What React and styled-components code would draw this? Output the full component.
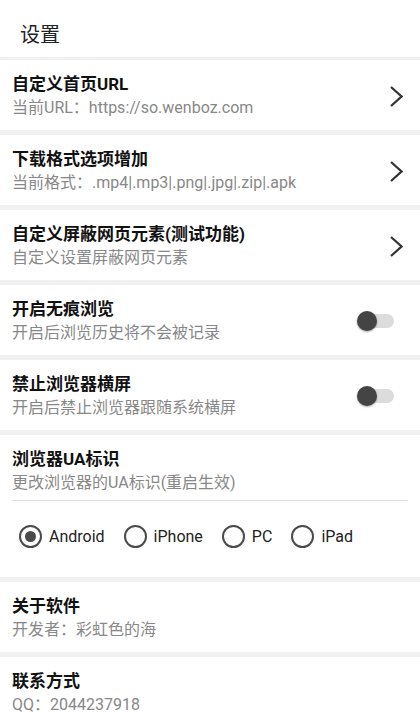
import React from "react";
import styled, { createGlobalStyle } from "styled-components";

const GlobalStyle = createGlobalStyle`
  html, body {
    margin: 0;
    padding: 0;
    background: #ffffff;
  }
  body {
    font-family: Roboto, "Noto Sans CJK SC", "Noto Sans", sans-serif;
    -webkit-font-smoothing: antialiased;
  }
`;

const Page = styled.div`
  width: 420px;
  height: 720px;
  overflow: hidden;
  background: #ffffff;
  display: flex;
  flex-direction: column;
`;

const Header = styled.div`
  height: 48px;
  padding: 9px 20px 0px 20px;
  display: flex;
  align-items: center;
  flex-shrink: 0;
  font-size: 20px;
  color: #222222;
`;

const Divider = styled.div`
  height: ${(props) => (props.height ? props.height : "5px")};
  background: #f1f1f1;
  flex-shrink: 0;
`;

const Row = styled.div`
  height: ${(props) => (props.height ? props.height : "48px")};
  padding: 12px 17px 10px 12px;
  display: flex;
  align-items: center;
  justify-content: space-between;
  flex-shrink: 0;
`;

const TextBlock = styled.div`
  display: flex;
  flex-direction: column;
`;

const Title = styled.div`
  font-size: 17px;
  font-weight: 700;
  line-height: 24px;
  color: #111111;
`;

const Sub = styled.div`
  font-size: 16px;
  line-height: 24px;
  color: #888888;
  white-space: nowrap;
`;

const Chevron = () => (
  <svg width="14" height="23" viewBox="0 0 14 23">
    <polyline
      points="2,2 12.5,11.5 2,21"
      fill="none"
      stroke="#333333"
      strokeWidth="2.2"
    />
  </svg>
);

const SwitchBox = styled.div`
  position: relative;
  width: 38px;
  height: 22px;
  margin-right: 8px;
`;

const Track = styled.div`
  position: absolute;
  left: 3px;
  top: 4px;
  width: 34px;
  height: 14px;
  border-radius: 7px;
  background: #dcdcdc;
`;

const Thumb = styled.div`
  position: absolute;
  left: 0px;
  top: 1px;
  width: 20px;
  height: 20px;
  border-radius: 50%;
  background: #444444;
  box-shadow: 0 1px 2px rgba(0, 0, 0, 0.35);
`;

const Switch = () => (
  <SwitchBox>
    <Track />
    <Thumb />
  </SwitchBox>
);

const UaBlock = styled.div`
  padding: 12px 12px 0px 12px;
  display: flex;
  flex-direction: column;
  flex-shrink: 0;
`;

const UaText = styled(TextBlock)`
  padding-bottom: 5px;
  border-bottom: 1px solid #dddddd;
`;

const RadioGroup = styled.div`
  height: 36px;
  padding: 17px 7px 23px 7px;
  display: flex;
  align-items: center;
`;

const RadioItem = styled.div`
  display: flex;
  align-items: center;
  gap: 7px;
  margin-right: 19px;
  font-size: 16px;
  color: #222222;
`;

const RadioCircle = styled.div`
  width: 19px;
  height: 19px;
  border: 2px solid #4a4a4a;
  border-radius: 50%;
  display: flex;
  align-items: center;
  justify-content: center;
`;

const RadioDot = styled.div`
  width: 11px;
  height: 11px;
  border-radius: 50%;
  background: #4a4a4a;
`;

const Radio = ({ label, checked }) => (
  <RadioItem>
    <RadioCircle>{checked && <RadioDot />}</RadioCircle>
    {label}
  </RadioItem>
);

const items = [
  { title: "自定义首页URL", sub: "当前URL：https://so.wenboz.com", kind: "link" },
  { title: "下载格式选项增加", sub: "当前格式：.mp4|.mp3|.png|.jpg|.zip|.apk", kind: "link" },
  { title: "自定义屏蔽网页元素(测试功能)", sub: "自定义设置屏蔽网页元素", kind: "link" },
  { title: "开启无痕浏览", sub: "开启后浏览历史将不会被记录", kind: "switch" },
  { title: "禁止浏览器横屏", sub: "开启后禁止浏览器跟随系统横屏", kind: "switch" },
];

const App = () => {
  return (
    <>
      <GlobalStyle />
      <Page>
        <Header>设置</Header>
        <Divider height="3px" />
        {items.map((item) => (
          <React.Fragment key={item.title}>
            <Row>
              <TextBlock>
                <Title>{item.title}</Title>
                <Sub>{item.sub}</Sub>
              </TextBlock>
              {item.kind === "link" ? <Chevron /> : <Switch />}
            </Row>
            <Divider />
          </React.Fragment>
        ))}
        <UaBlock>
          <UaText>
            <Title>浏览器UA标识</Title>
            <Sub>更改浏览器的UA标识(重启生效)</Sub>
          </UaText>
          <RadioGroup>
            <Radio label="Android" checked />
            <Radio label="iPhone" />
            <Radio label="PC" />
            <Radio label="iPad" />
          </RadioGroup>
        </UaBlock>
        <Divider />
        <Row>
          <TextBlock>
            <Title>关于软件</Title>
            <Sub>开发者：彩虹色的海</Sub>
          </TextBlock>
        </Row>
        <Divider />
        <Row height="72px">
          <TextBlock>
            <Title>联系方式</Title>
            <Sub>QQ：2044237918</Sub>
            <Sub>配音秀ID：8145841</Sub>
          </TextBlock>
        </Row>
      </Page>
    </>
  );
};

export default App;
